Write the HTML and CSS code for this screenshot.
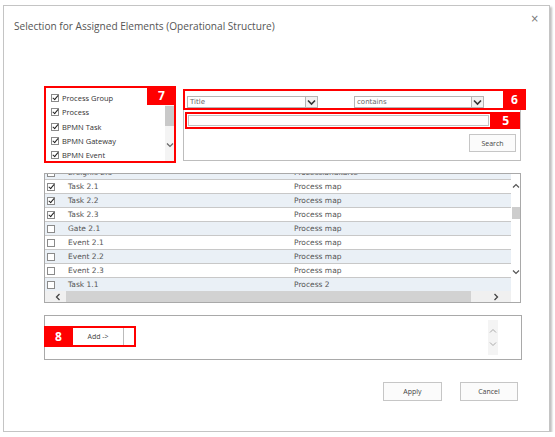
FILE: index.html
```html
<!DOCTYPE html>
<html lang="en">
<head>
    <meta charset="UTF-8">
    <title>Selection for Assigned Elements</title>
    <link rel="stylesheet" href="styles.css">
</head>
<body>

<div class="dialog">
    <div class="title-bar">
        <span class="title">Selection for Assigned Elements (Operational Structure)</span>
        <span class="close">×</span>
    </div>

    <div class="filter-row">
        <div class="type-box">
            <ul class="type-list">
                <li><span class="cb checked"></span>Process Group</li>
                <li><span class="cb checked"></span>Process</li>
                <li><span class="cb checked"></span>BPMN Task</li>
                <li><span class="cb checked"></span>BPMN Gateway</li>
                <li><span class="cb checked"></span>BPMN Event</li>
            </ul>
            <div class="list-scroll">
                <span class="list-thumb"></span>
                <svg class="list-down" width="8" height="6" viewBox="0 0 8 6"><polyline points="1,1.5 4,4.5 7,1.5" fill="none" stroke="#666" stroke-width="1.2"/></svg>
            </div>
            <span class="badge badge-7">7</span>
        </div>

        <div class="search-panel">
            <div class="criteria">
                <div class="select select-field">Title
                    <span class="select-arrow"><svg width="9" height="7" viewBox="0 0 9 7"><polyline points="1,1.5 4.5,5 8,1.5" fill="none" stroke="#333" stroke-width="1.6"/></svg></span>
                </div>
                <div class="select select-op">contains
                    <span class="select-arrow"><svg width="9" height="7" viewBox="0 0 9 7"><polyline points="1,1.5 4.5,5 8,1.5" fill="none" stroke="#333" stroke-width="1.6"/></svg></span>
                </div>
                <span class="badge badge-6">6</span>
            </div>
            <div class="term-row">
                <div class="term"><div class="term-input"></div></div>
                <span class="badge badge-5">5</span>
            </div>
            <div class="search-actions">
                <button class="btn btn-search">Search</button>
            </div>
        </div>
    </div>

    <div class="result-grid">
        <div class="grid-body">
            <div class="grid-rows">
                <div class="grid-row alt partial"><span class="cell-cb"><span class="cb"></span></span><span class="cell-name">Ereignis 2.3</span><span class="cell-map">Prozesslandkarte</span></div>
                <div class="grid-row"><span class="cell-cb"><span class="cb checked"></span></span><span class="cell-name">Task 2.1</span><span class="cell-map">Process map</span></div>
                <div class="grid-row alt"><span class="cell-cb"><span class="cb checked"></span></span><span class="cell-name">Task 2.2</span><span class="cell-map">Process map</span></div>
                <div class="grid-row"><span class="cell-cb"><span class="cb checked"></span></span><span class="cell-name">Task 2.3</span><span class="cell-map">Process map</span></div>
                <div class="grid-row alt"><span class="cell-cb"><span class="cb"></span></span><span class="cell-name">Gate 2.1</span><span class="cell-map">Process map</span></div>
                <div class="grid-row"><span class="cell-cb"><span class="cb"></span></span><span class="cell-name">Event 2.1</span><span class="cell-map">Process map</span></div>
                <div class="grid-row alt"><span class="cell-cb"><span class="cb"></span></span><span class="cell-name">Event 2.2</span><span class="cell-map">Process map</span></div>
                <div class="grid-row"><span class="cell-cb"><span class="cb"></span></span><span class="cell-name">Event 2.3</span><span class="cell-map">Process map</span></div>
                <div class="grid-row alt"><span class="cell-cb"><span class="cb"></span></span><span class="cell-name">Task 1.1</span><span class="cell-map">Process 2</span></div>
            </div>
            <div class="v-scroll">
                <svg width="8" height="6" viewBox="0 0 8 6"><polyline points="1,4.5 4,1.5 7,4.5" fill="none" stroke="#555" stroke-width="1.2"/></svg>
                <span class="v-thumb"></span>
                <svg class="v-down" width="8" height="6" viewBox="0 0 8 6"><polyline points="1,1.5 4,4.5 7,1.5" fill="none" stroke="#555" stroke-width="1.2"/></svg>
            </div>
        </div>
        <div class="h-scroll">
            <span class="h-left"><svg width="6" height="8" viewBox="0 0 6 8"><polyline points="4.5,1 1.5,4 4.5,7" fill="none" stroke="#444" stroke-width="1.3"/></svg></span>
            <span class="h-thumb"></span>
            <span class="h-right"><svg width="6" height="8" viewBox="0 0 6 8"><polyline points="1.5,1 4.5,4 1.5,7" fill="none" stroke="#444" stroke-width="1.3"/></svg></span>
            <span class="h-corner"></span>
        </div>
    </div>

    <div class="selected-box">
        <div class="add-group">
            <span class="badge badge-8">8</span>
            <button class="btn-add">Add -&gt;</button>
            <span class="add-rest"></span>
        </div>
        <div class="selected-scroll">
            <svg width="8" height="6" viewBox="0 0 8 6"><polyline points="1,4.5 4,1.5 7,4.5" fill="none" stroke="#aaa" stroke-width="1"/></svg>
            <svg width="8" height="6" viewBox="0 0 8 6"><polyline points="1,1.5 4,4.5 7,1.5" fill="none" stroke="#aaa" stroke-width="1"/></svg>
        </div>
    </div>

    <div class="footer">
        <button class="btn btn-apply">Apply</button>
        <button class="btn btn-cancel">Cancel</button>
    </div>
</div>

</body>
</html>
```

FILE: styles.css
```css
* {
    box-sizing: border-box;
}
body {
    margin: 0;
    background: #fff;
    font-family: 'Open Sans', sans-serif;
    color: #444;
}
.dialog {
    margin: 5px 0 0 3px;
    width: 547px;
    height: 427px;
    border: 1px solid #c4c4c4;
    box-shadow: 2px 2px 2px rgba(0, 0, 0, 0.25);
    background: #fff;
}
.title-bar {
    display: flex;
    justify-content: space-between;
    padding: 13px 10px 0 10px;
}
.title {
    font-size: 10.1px;
    line-height: 14px;
    color: #555;
}
.close {
    font-family: 'DejaVu Sans', sans-serif;
    font-size: 10px;
    line-height: 14px;
    color: #777;
    margin-top: -7px;
}

/* filter area */
.filter-row {
    display: flex;
    align-items: flex-start;
    margin: 53px 0 0 40px;
}
.type-box {
    position: relative;
    display: flex;
    width: 132px;
    height: 77px;
    border: 2px solid #f00;
    background: #fff;
}
.type-list {
    list-style: none;
    margin: 0;
    padding: 3px 0 0 5px;
    flex: 1;
}
.type-list li {
    display: flex;
    align-items: center;
    height: 14.3px;
    font-size: 7.5px;
    color: #333;
}
.type-list .cb {
    margin-right: 3px;
}
.list-scroll {
    width: 9px;
    display: flex;
    flex-direction: column;
    align-items: center;
    background: #f4f4f4;
}
.list-thumb {
    width: 9px;
    height: 20px;
    margin-top: 18px;
    background: #c9c9c9;
}
.list-down {
    margin-top: 16px;
}
.badge {
    display: flex;
    align-items: center;
    justify-content: center;
    background: #f00;
    color: #fff;
    font-weight: bold;
    font-size: 12px;
}
.badge-7 {
    position: absolute;
    top: -2px;
    right: -2px;
    width: 29px;
    height: 19px;
}

.search-panel {
    margin: 3px 0 0 7px;
    width: 338px;
    height: 72px;
    border: 1px solid #bdbdbd;
}
.criteria {
    display: flex;
    margin: -1px 0 0 -1px;
    width: 343px;
    height: 21px;
    border: 2px solid #f00;
    background: #fff;
}
.select {
    display: flex;
    justify-content: space-between;
    align-self: flex-end;
    height: 12px;
    border: 1px solid #b5b5b5;
    font-family: 'DejaVu Sans', sans-serif;
    font-size: 7px;
    line-height: 10px;
    color: #666;
    padding-left: 2px;
}
.select-field {
    width: 131px;
    margin-left: 2px;
}
.select-op {
    width: 130px;
    margin-left: 36px;
}
.select-arrow {
    width: 12px;
    height: 10px;
    border-left: 1px solid #b5b5b5;
    background: #f2f2f2;
    display: flex;
    align-items: center;
    justify-content: center;
}
.badge-6 {
    margin: -2px -2px -2px auto;
    width: 23px;
    height: 21px;
}
.term-row {
    display: flex;
    margin: 2px 0 0 1px;
}
.term {
    width: 312px;
    height: 17px;
    border: 2px solid #f00;
    padding: 1px;
    background: #fff;
}
.term-input {
    height: 11px;
    border: 1px solid #c2c2c2;
}
.badge-5 {
    width: 29px;
    height: 17px;
}
.search-actions {
    display: flex;
    justify-content: flex-end;
    margin: 5px 4px 0 0;
}
.btn {
    border: 1px solid #c6c6c6;
    background: #fbfbfb;
    font-family: 'Open Sans', sans-serif;
    font-size: 7px;
    color: #444;
    padding: 0;
}
.btn-search {
    width: 47px;
    height: 18px;
}

/* result grid */
.result-grid {
    margin: 10px 0 0 40px;
    width: 477px;
    border: 1px solid #a9a9a9;
}
.grid-body {
    display: flex;
    height: 117px;
    overflow: hidden;
}
.grid-rows {
    flex: 1;
    overflow: hidden;
}
.grid-row {
    display: flex;
    align-items: center;
    height: 14px;
    border-bottom: 1px solid #c8c8c8;
    font-family: 'DejaVu Sans', sans-serif;
    font-size: 7.5px;
    color: #555;
    background: #fff;
}
.grid-row.alt {
    background: #eaf0f6;
}
.grid-row.partial {
    margin-top: -8px;
}
.cell-cb {
    width: 23px;
    padding-left: 2px;
    display: flex;
}
.cell-name {
    width: 226px;
}
.cb {
    position: relative;
    display: inline-block;
    width: 8px;
    height: 8px;
    border: 1px solid #8a8a8a;
    background: #fff;
    flex-shrink: 0;
}
.cb.checked::after {
    content: '';
    position: absolute;
    left: 2px;
    top: -1px;
    width: 2px;
    height: 5px;
    border: solid #222;
    border-width: 0 1.5px 1.5px 0;
    transform: rotate(40deg);
}
.v-scroll {
    width: 9px;
    display: flex;
    flex-direction: column;
    align-items: center;
    background: #fff;
    padding-top: 9px;
}
.v-thumb {
    width: 8px;
    height: 12px;
    margin-top: 18px;
    background: #cdcdcd;
}
.v-down {
    margin-top: 50px;
}
.h-scroll {
    display: flex;
    align-items: center;
    height: 11px;
    background: #f0f0f0;
}
.h-left {
    width: 21px;
    height: 11px;
    display: flex;
    align-items: center;
    justify-content: center;
    padding-left: 5px;
}
.h-thumb {
    width: 406px;
    height: 11px;
    background: #d2d2d2;
}
.h-right {
    width: 40px;
    display: flex;
    justify-content: flex-end;
    padding-right: 12px;
}
.h-corner {
    width: 9px;
    height: 11px;
    background: #fff;
}

/* selected items */
.selected-box {
    display: flex;
    align-items: flex-start;
    margin: 12px 0 0 40px;
    width: 478px;
    height: 45px;
    border: 1px solid #a9a9a9;
}
.add-group {
    display: flex;
    margin: 10px 0 0 -1px;
    width: 92px;
    height: 21px;
    border: 2px solid #f00;
    background: #fff;
}
.badge-8 {
    width: 29px;
    height: 21px;
    margin: -2px 0 -2px -2px;
}
.btn-add {
    width: 51px;
    height: 17px;
    border: none;
    border-right: 1px solid #bbb;
    background: #fff;
    font-family: 'Open Sans', sans-serif;
    font-size: 7px;
    color: #444;
    padding: 0;
}
.add-rest {
    flex: 1;
}
.selected-scroll {
    margin: 4px 23px 0 auto;
    width: 10px;
    height: 35px;
    background: #f4f4f4;
    display: flex;
    flex-direction: column;
    align-items: center;
    justify-content: center;
    gap: 7px;
}

.footer {
    display: flex;
    justify-content: flex-end;
    gap: 18px;
    margin-top: 22px;
    padding-right: 31px;
}
.btn-apply {
    width: 59px;
    height: 19px;
}
.btn-cancel {
    width: 58px;
    height: 19px;
}
```
